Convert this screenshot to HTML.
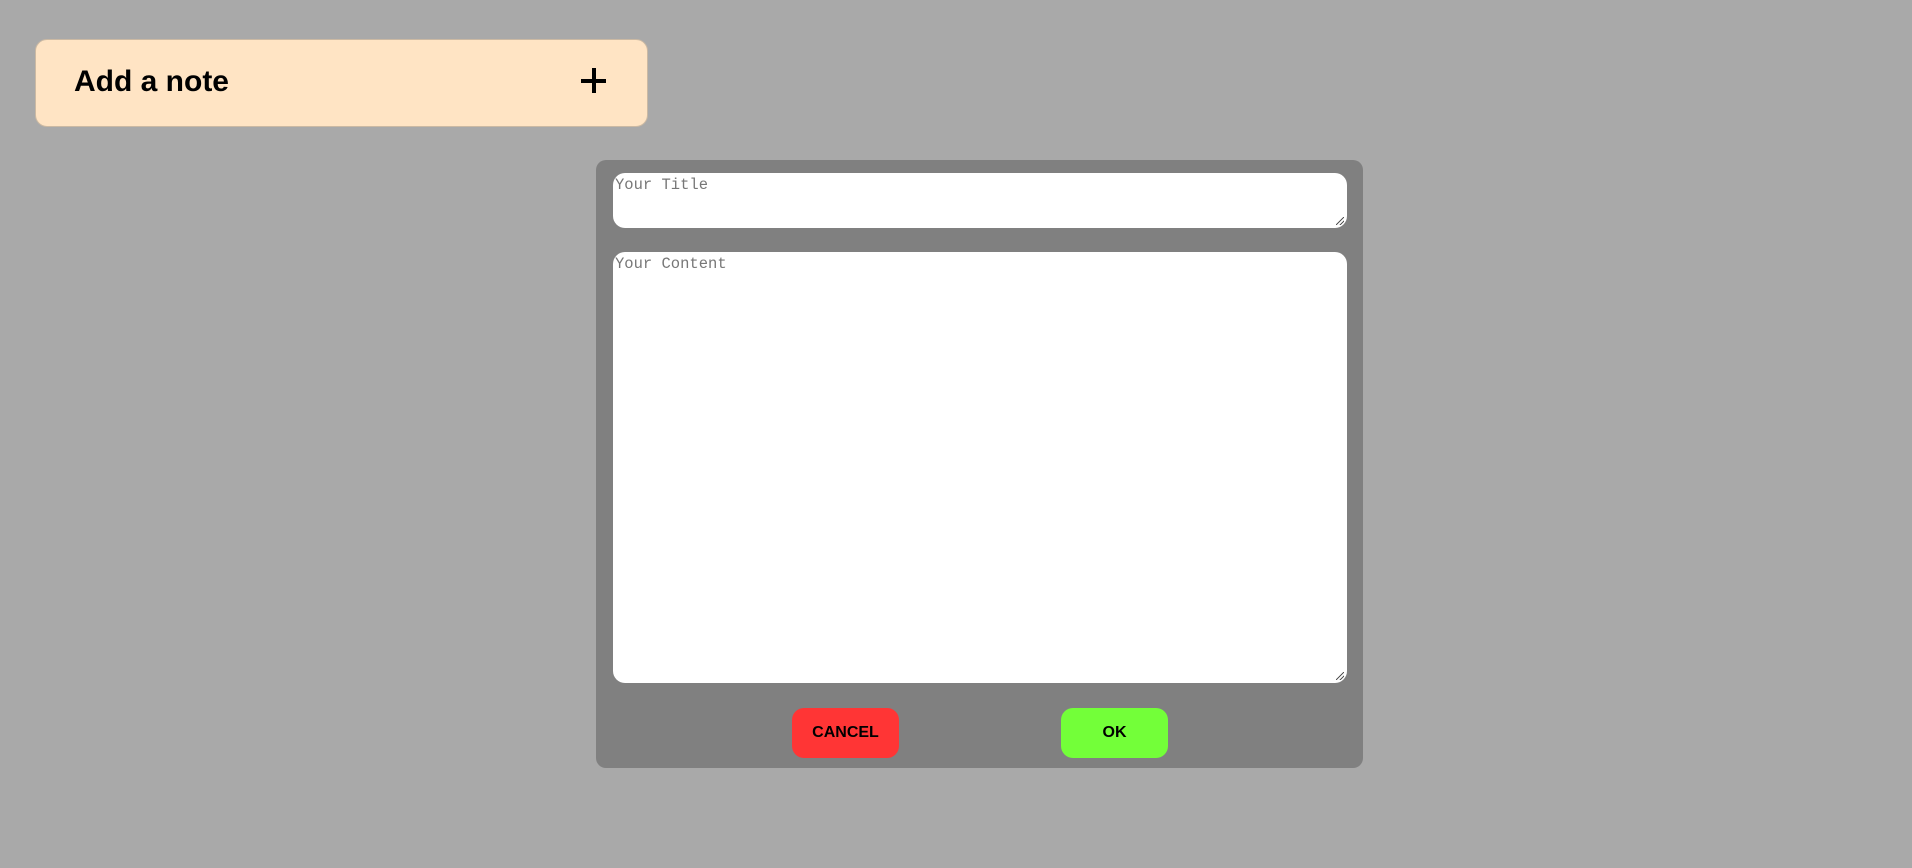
<!DOCTYPE html>
<html><head><style>
html,body{margin:0;padding:0;width:1912px;height:868px;background:#a9a9a9;overflow:hidden;font-family:"Liberation Sans",Arial,sans-serif;}
.note{position:absolute;left:35px;top:39px;width:613px;height:88px;background:#ffe4c4;border:1px solid #cbb9a3;border-radius:12px;box-sizing:border-box;}
.note span{position:absolute;left:38px;top:25px;font-size:30px;font-weight:bold;color:#000;}
.plus{position:absolute;left:581px;top:68px;width:25px;height:25px;}
.plus:before{content:"";position:absolute;left:0;top:10.5px;width:25px;height:4px;background:#000;}
.plus:after{content:"";position:absolute;left:10.5px;top:0;width:4px;height:25px;background:#000;}
.modal{position:absolute;left:596px;top:160px;width:767px;height:608px;background:#808080;border-radius:10px;}
.ta{position:absolute;left:17px;width:734px;background:#fff;border-radius:12px;font-family:"Liberation Mono",monospace;font-size:15.5px;color:#777;padding:3px 2px;box-sizing:border-box;}
.ta i{position:absolute;right:3px;bottom:3px;width:8px;height:8px;background:linear-gradient(135deg,transparent 45%,#555 45%,#555 55%,transparent 55%,transparent 70%,#555 70%,#555 80%,transparent 80%);}
.btn{position:absolute;top:548px;width:107px;height:50px;border-radius:12px;font-weight:bold;font-size:16px;text-align:center;line-height:50px;color:#000;}
</style></head><body>
<div class="note"><span>Add a note</span></div>
<div class="plus"></div>
<div class="modal">
<div class="ta" style="top:13px;height:55px;">Your Title<i></i></div>
<div class="ta" style="top:92px;height:431px;">Your Content<i></i></div>
<div class="btn" style="left:196px;background:#ff3535;">CANCEL</div>
<div class="btn" style="left:465px;background:#73ff39;">OK</div>
</div>
</body></html>
